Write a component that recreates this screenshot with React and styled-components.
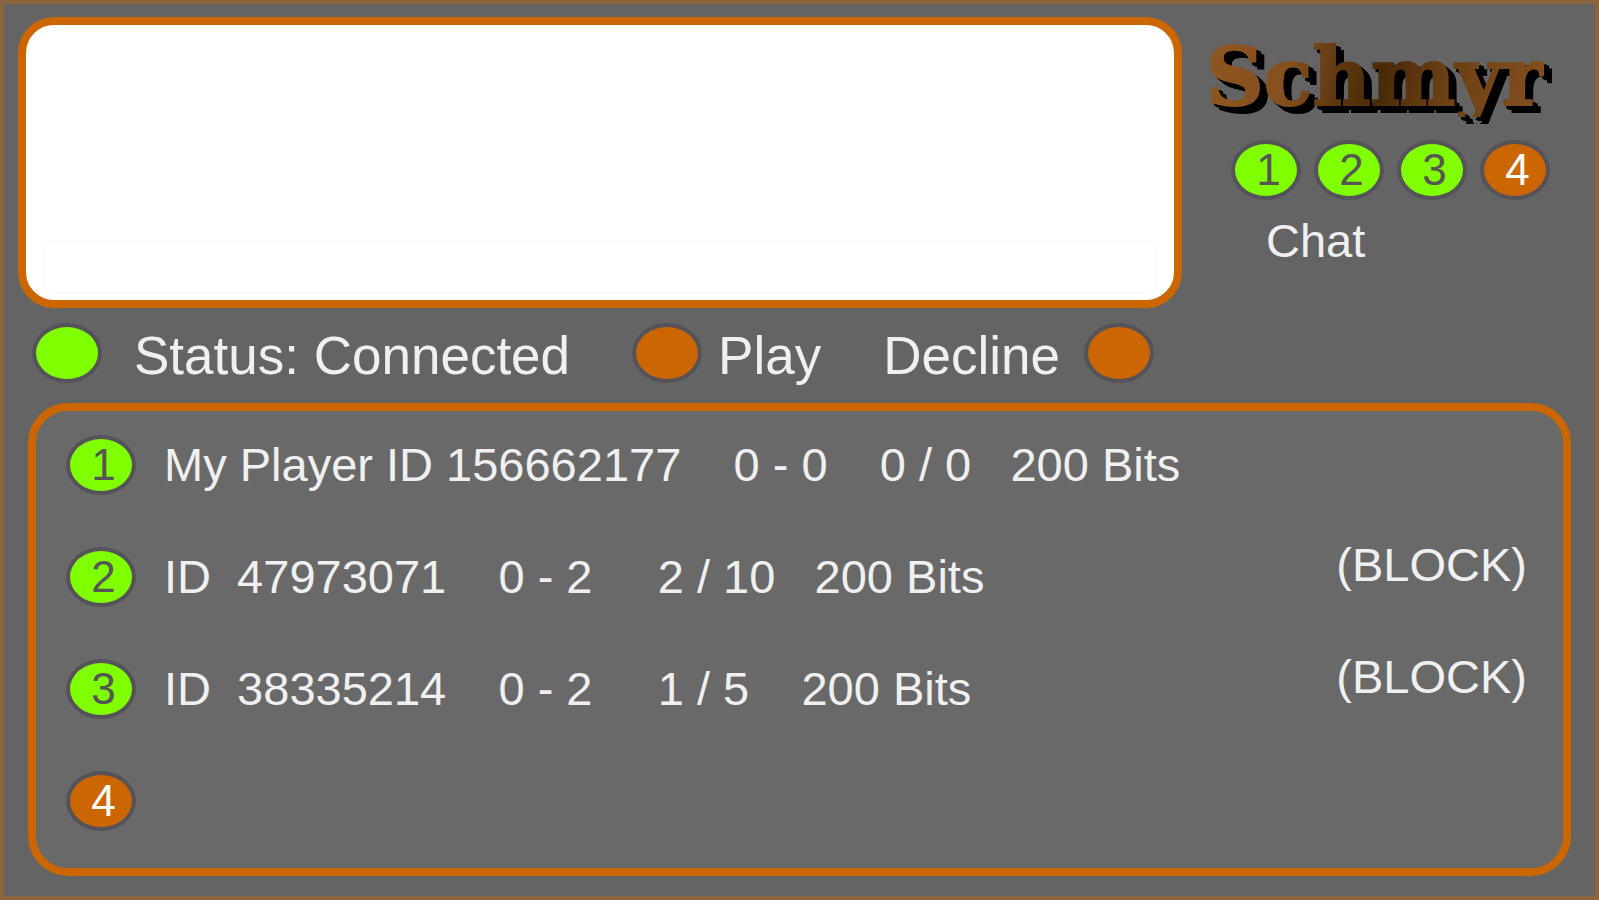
import React from "react";
import styled, { createGlobalStyle, ThemeProvider } from "styled-components";

const theme = {
  colorPage: "#646464",
  colorPanel: "#696969",
  colorFrame: "#8c643e",
  colorAccent: "#cc6600",
  colorOn: "#80ff00",
  colorRing: "#555359",
  colorFont: "#f0f0f0"
};

const seats = [
  {
    seat: 1,
    taken: true,
    info: "My Player ID 156662177    0 - 0    0 / 0   200 Bits"
  },
  {
    seat: 2,
    taken: true,
    info: "ID  47973071    0 - 2     2 / 10   200 Bits",
    canBlock: true
  },
  {
    seat: 3,
    taken: true,
    info: "ID  38335214    0 - 2     1 / 5    200 Bits",
    canBlock: true
  },
  { seat: 4, taken: false }
];

const App = () => {
  return (
    <ThemeProvider theme={theme}>
      <GlobalStyle />
      <Page>
        <TopRow>
          <ChatBox>
            <ChatLog role="log" />
            <ChatInput id="chat-message" type="text" />
          </ChatBox>
          <Side>
            <Logo>Schmyr</Logo>
            <SeatList>
              {seats.map(({ seat, taken }) => (
                <Light key={seat} $on={taken}>
                  {seat}
                </Light>
              ))}
            </SeatList>
            <ChatLabel htmlFor="chat-message">Chat</ChatLabel>
          </Side>
        </TopRow>
        <StatusBar>
          <Status>
            <Light as="span" $on />
            <StatusText>Status: Connected</StatusText>
          </Status>
          <PlayButton type="button">
            <Light as="span" />
            <StatusText>Play</StatusText>
          </PlayButton>
          <DeclineButton type="button">
            <StatusText>Decline</StatusText>
            <Light as="span" />
          </DeclineButton>
        </StatusBar>
        <PlayerPanel>
          {seats.map(({ seat, taken, info, canBlock }) => (
            <PlayerRow key={seat}>
              <Light as="span" $on={taken}>
                {seat}
              </Light>
              <PlayerInfo>{info}</PlayerInfo>
              {canBlock && <BlockButton type="button">(BLOCK)</BlockButton>}
            </PlayerRow>
          ))}
        </PlayerPanel>
      </Page>
    </ThemeProvider>
  );
};

const GlobalStyle = createGlobalStyle`
  * {
    box-sizing: border-box;
  }
  body {
    margin: 0;
    background: ${({ theme }) => theme.colorPage};
    color: ${({ theme }) => theme.colorFont};
    font-family: "Liberation Sans", Arial, sans-serif;
    font-size: 47px;
  }
  button {
    padding: 0;
    border: 0;
    background: none;
    color: inherit;
    font: inherit;
    cursor: pointer;
  }
`;

const Page = styled.main`
  display: flex;
  flex-direction: column;
  min-height: 100vh;
  border: 4px solid ${({ theme }) => theme.colorFrame};
`;

const TopRow = styled.header`
  display: flex;
  padding: 13px 0 0 14px;
`;

const ChatBox = styled.section`
  display: flex;
  flex: 1;
  flex-direction: column;
  min-width: 0;
  border: 8px solid ${({ theme }) => theme.colorAccent};
  border-radius: 36px;
  background: #fff;
`;

const ChatLog = styled.div`
  flex: 1;
  min-height: 215px;
`;

const ChatInput = styled.input`
  height: 54px;
  margin: 0 16px 6px;
  padding: 0 12px;
  border: 2px solid #fafafa;
  border-radius: 12px;
  background: #fff;
  color: #333;
  font: inherit;
  font-size: 32px;
  outline: none;
`;

const Side = styled.div`
  display: flex;
  flex: none;
  flex-direction: column;
  align-items: flex-start;
  width: 413px;
  padding: 20px 0 0 24px;
`;

const Logo = styled.h1`
  margin: 0 0 23px;
  background: linear-gradient(
    100deg,
    #8f5620 0%,
    #83501f 25%,
    #5a340e 42%,
    #4a2a08 52%,
    #6b3f14 70%,
    #85501f 100%
  );
  background-clip: text;
  color: transparent;
  font-family: "DejaVu Serif", serif;
  font-size: 80px;
  font-weight: 700;
  line-height: 80px;
  filter: drop-shadow(3px 3px 0 #000) drop-shadow(5px 4px 0 #000);
  -webkit-text-stroke: 2px transparent;
`;

const SeatList = styled.ol`
  display: flex;
  gap: 13px;
  margin: 0;
  padding: 0 0 0 25px;
  list-style: none;
`;

const Light = styled.li`
  display: flex;
  flex: none;
  align-items: center;
  justify-content: center;
  width: 70px;
  height: 60px;
  padding-left: 5px;
  border: 4px solid ${({ theme }) => theme.colorRing};
  border-radius: 50%;
  background: ${({ theme, $on }) => ($on ? theme.colorOn : theme.colorAccent)};
  color: ${({ $on }) => ($on ? "#555" : "#fff")};
  font-size: 44px;
  line-height: 52px;
`;

const ChatLabel = styled.label`
  margin-top: 17px;
  padding-left: 60px;
  line-height: 48px;
`;

const StatusBar = styled.div`
  display: flex;
  flex-wrap: wrap;
  align-items: center;
  gap: 0 62px;
  padding: 15px 28px 20px;
  font-size: 53px;
  line-height: 60px;
`;

const Status = styled.div`
  display: flex;
  gap: 32px;
`;

const PlayButton = styled.button`
  display: flex;
  gap: 16px;
`;

const DeclineButton = styled.button`
  display: flex;
  gap: 24px;
`;

const StatusText = styled.span`
  height: 60px;
  padding-top: 3px;
`;

const PlayerPanel = styled.ul`
  display: flex;
  flex: 1;
  flex-direction: column;
  gap: 52px;
  margin: 0 24px 20px;
  padding: 24px 36px 34px 30px;
  border: 8px solid ${({ theme }) => theme.colorAccent};
  border-radius: 40px;
  background: ${({ theme }) => theme.colorPanel};
  list-style: none;
`;

const PlayerRow = styled.li`
  display: flex;
  align-items: center;
  gap: 28px;
`;

const PlayerInfo = styled.span`
  flex: 1;
  line-height: 60px;
  white-space: pre;
`;

const BlockButton = styled.button`
  align-self: flex-start;
  line-height: 36px;
`;

export default App;
